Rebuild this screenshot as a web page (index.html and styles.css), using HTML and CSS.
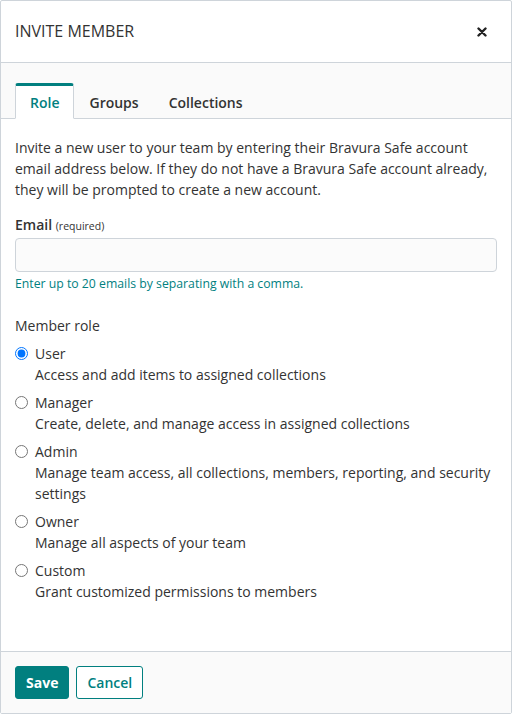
FILE: index.html
```html
<!DOCTYPE html>
<html lang="en">
<head>
    <meta charset="UTF-8">
    <meta name="viewport" content="width=device-width, initial-scale=1.0">
    <title>Invite Member</title>
    <link rel="stylesheet" href="styles.css">
</head>
<body>
    <div class="modal">
        <div class="modal-header">
            <h1 class="modal-title">INVITE MEMBER</h1>
            <button class="close" aria-label="Close">
                <svg width="10" height="10" viewBox="0 0 10 10"><path d="M1.5 1.5 L8.5 8.5 M8.5 1.5 L1.5 8.5" stroke="#222" stroke-width="2.4" stroke-linecap="round"/></svg>
            </button>
        </div>
        <div class="tabs">
            <a class="tab active">Role</a>
            <a class="tab">Groups</a>
            <a class="tab">Collections</a>
        </div>
        <div class="modal-body">
            <p class="intro">Invite a new user to your team by entering their Bravura Safe account email address below. If they do not have a Bravura Safe account already, they will be prompted to create a new account.</p>
            <label class="field-label" for="email">Email <small>(required)</small></label>
            <input class="input" id="email" type="text">
            <div class="help">Enter up to 20 emails by separating with a comma.</div>

            <h3 class="section-title">Member role</h3>
            <div class="roles">
                <label class="role">
                    <input type="radio" name="role" checked>
                    <span class="role-text">
                        <span class="role-name">User</span>
                        <span class="role-desc">Access and add items to assigned collections</span>
                    </span>
                </label>
                <label class="role">
                    <input type="radio" name="role">
                    <span class="role-text">
                        <span class="role-name">Manager</span>
                        <span class="role-desc">Create, delete, and manage access in assigned collections</span>
                    </span>
                </label>
                <label class="role">
                    <input type="radio" name="role">
                    <span class="role-text">
                        <span class="role-name">Admin</span>
                        <span class="role-desc">Manage team access, all collections, members, reporting, and security settings</span>
                    </span>
                </label>
                <label class="role">
                    <input type="radio" name="role">
                    <span class="role-text">
                        <span class="role-name">Owner</span>
                        <span class="role-desc">Manage all aspects of your team</span>
                    </span>
                </label>
                <label class="role">
                    <input type="radio" name="role">
                    <span class="role-text">
                        <span class="role-name">Custom</span>
                        <span class="role-desc">Grant customized permissions to members</span>
                    </span>
                </label>
            </div>
        </div>
        <div class="modal-footer">
            <button class="btn btn-primary">Save</button>
            <button class="btn btn-outline">Cancel</button>
        </div>
    </div>
</body>
</html>
```

FILE: styles.css
```css
body {
    margin: 0;
    font-family: "Open Sans", Arial, sans-serif;
    font-size: 14px;
    line-height: 21px;
    color: #333;
    background-color: #fff;
}
.modal {
    border: 1px solid #ced4da;
    border-radius: 2px;
    height: 712px;
    display: flex;
    flex-direction: column;
    background-color: #fff;
}
.modal-header {
    display: flex;
    align-items: center;
    justify-content: space-between;
    height: 61px;
    padding: 0 14px 0 14px;
    border-bottom: 1px solid #ced4da;
}
.modal-title {
    margin: 0;
    font-size: 16px;
    font-weight: 400;
    color: #333;
}
.close {
    border: 0;
    background: none;
    padding: 0;
    margin-right: 10px;
    display: flex;
    cursor: pointer;
}
.tabs {
    display: flex;
    padding: 20px 14px 0;
    background-color: #fafafa;
    border-bottom: 1px solid #ced4da;
}
.tab {
    display: block;
    padding: 6px 14px 5px;
    margin-bottom: -1px;
    font-weight: 600;
    color: #333;
    border: 1px solid transparent;
    border-top: 3px solid transparent;
    border-radius: 3px 3px 0 0;
    cursor: pointer;
}
.tab.active {
    color: #017f7f;
    background-color: #fff;
    border-color: #ced4da;
    border-top-color: #017f7f;
    border-bottom-color: #fff;
}
.modal-body {
    flex: 1;
    padding: 18px 14px 15px;
}
.intro {
    margin: 0 0 14px;
}
.field-label {
    display: block;
    font-weight: 600;
    margin-bottom: 1px;
}
.field-label small {
    font-size: 10.5px;
    font-weight: 400;
}
.input {
    display: block;
    box-sizing: border-box;
    width: 100%;
    height: 34px;
    border: 1px solid #ced4da;
    border-radius: 4px;
    background-color: #fbfbfb;
    font: inherit;
    padding: 4px 8px;
}
.help {
    margin-top: 3px;
    font-size: 12.25px;
    line-height: 18px;
    color: #017f7f;
}
.section-title {
    margin: 22px 0 7px;
    font-size: 14px;
    font-weight: 500;
    line-height: 21px;
}
.roles {
    display: flex;
    flex-direction: column;
    gap: 7px;
}
.role {
    display: flex;
    align-items: flex-start;
    gap: 7px;
}
.role input {
    margin: 4px 0 0;
    width: 13px;
    height: 13px;
    flex: none;
}
.role-text {
    display: flex;
    flex-direction: column;
}
.role-name {
    font-weight: 500;
}
.modal-footer {
    display: flex;
    gap: 7px;
    padding: 14px 14px 14px;
    background-color: #fafafa;
    border-top: 1px solid #ced4da;
}
.btn {
    font: inherit;
    font-weight: 600;
    height: 33px;
    padding: 0 10px;
    border-radius: 3px;
    cursor: pointer;
}
.btn-primary {
    background-color: #017f7f;
    border: 1px solid #017f7f;
    color: #fff;
    font-weight: 700;
}
.btn-outline {
    background-color: #fff;
    border: 1px solid #017f7f;
    color: #017f7f;
}
```
